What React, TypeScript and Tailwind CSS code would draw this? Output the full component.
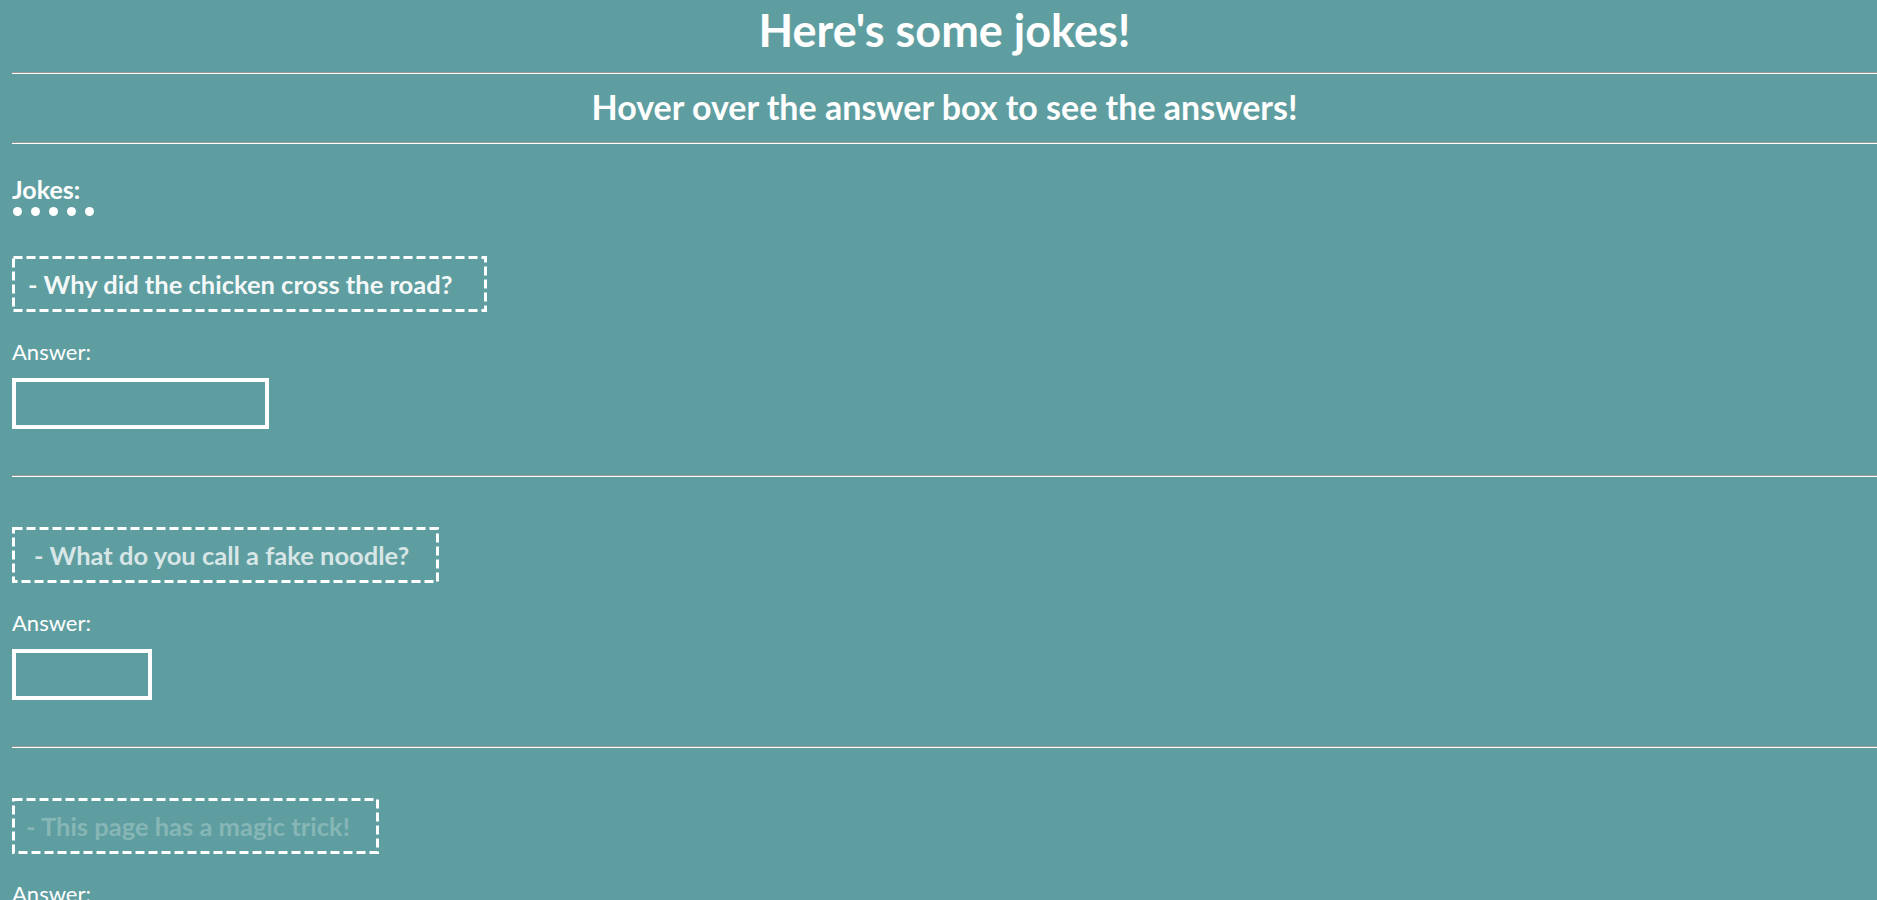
import React from 'react';

type Joke = {
  question: string;
  boxWidth: string;
  textPad: string;
  tone: string;
  answerWidth: string;
};

const jokes: Joke[] = [
  {
    question: '- Why did the chicken cross the road?',
    boxWidth: 'w-[475px]',
    textPad: 'pl-[13px]',
    tone: 'text-white/95',
    answerWidth: 'w-[257px]',
  },
  {
    question: '- What do you call a fake noodle?',
    boxWidth: 'w-[427px]',
    textPad: 'pl-[19px]',
    tone: 'text-white/75',
    answerWidth: 'w-[140px]',
  },
  {
    question: '- This page has a magic trick!',
    boxWidth: 'w-[367px]',
    textPad: 'pl-[11px]',
    tone: 'text-white/25',
    answerWidth: 'w-[200px]',
  },
];

const Rule: React.FC<{ className?: string }> = ({ className = '' }) => (
  <hr className={`border-0 border-t border-b border-t-[#9a9a9a] border-b-white ${className}`} />
);

// dashed outline drawn over the question box, 9px dashes like the original
const DashedOutline: React.FC = () => (
  <svg className="pointer-events-none absolute inset-0 h-full w-full" preserveAspectRatio="none">
    <rect
      x="1.5"
      y="1.5"
      width="calc(100% - 3px)"
      height="calc(100% - 3px)"
      fill="none"
      stroke="white"
      strokeWidth="3"
      strokeDasharray="9 4"
    />
  </svg>
);

const JokeBlock: React.FC<{ joke: Joke; last?: boolean }> = ({ joke, last }) => (
  <div>
    <div className={`relative mt-[50px] h-[56px] ${joke.boxWidth} p-[3px]`}>
      <DashedOutline />
      <h3 className={`${joke.textPad} ${joke.tone} text-[25.5px] font-bold leading-[50px] whitespace-nowrap`}>
        {joke.question}
      </h3>
    </div>
    <p className="mt-[26px] text-[22px] leading-[28px]">Answer:</p>
    <div className={`mt-[12px] h-[51px] ${joke.answerWidth} border-4 border-white`} />
    {!last && <Rule className="mt-[46px]" />}
  </div>
);

const App: React.FC = () => {
  return (
    <div className="min-h-screen overflow-hidden bg-[#5f9ea0] pl-[12px] text-white font-['Lato','Open_Sans',sans-serif]">
      <h1 className="text-center text-[45px] font-bold leading-[61px]">Here's some jokes!</h1>
      <Rule className="mt-[11px]" />
      <h2 className="mt-[8px] text-center text-[34px] font-bold leading-[50px]">
        Hover over the answer box to see the answers!
      </h2>
      <Rule className="mt-[10px]" />

      <h4 className="mt-[30px] text-[25px] font-bold leading-[30px]">Jokes:</h4>
      <ul className="mt-[3px] flex gap-[9px] pl-[1px]">
        {[0, 1, 2, 3, 4].map((i) => (
          <li key={i} className="h-[9px] w-[9px] rounded-full bg-white" />
        ))}
      </ul>

      <div className="-mt-[10px]">
        {jokes.map((joke, index) => (
          <JokeBlock key={index} joke={joke} last={index === jokes.length - 1} />
        ))}
      </div>
    </div>
  );
};

export default App;
